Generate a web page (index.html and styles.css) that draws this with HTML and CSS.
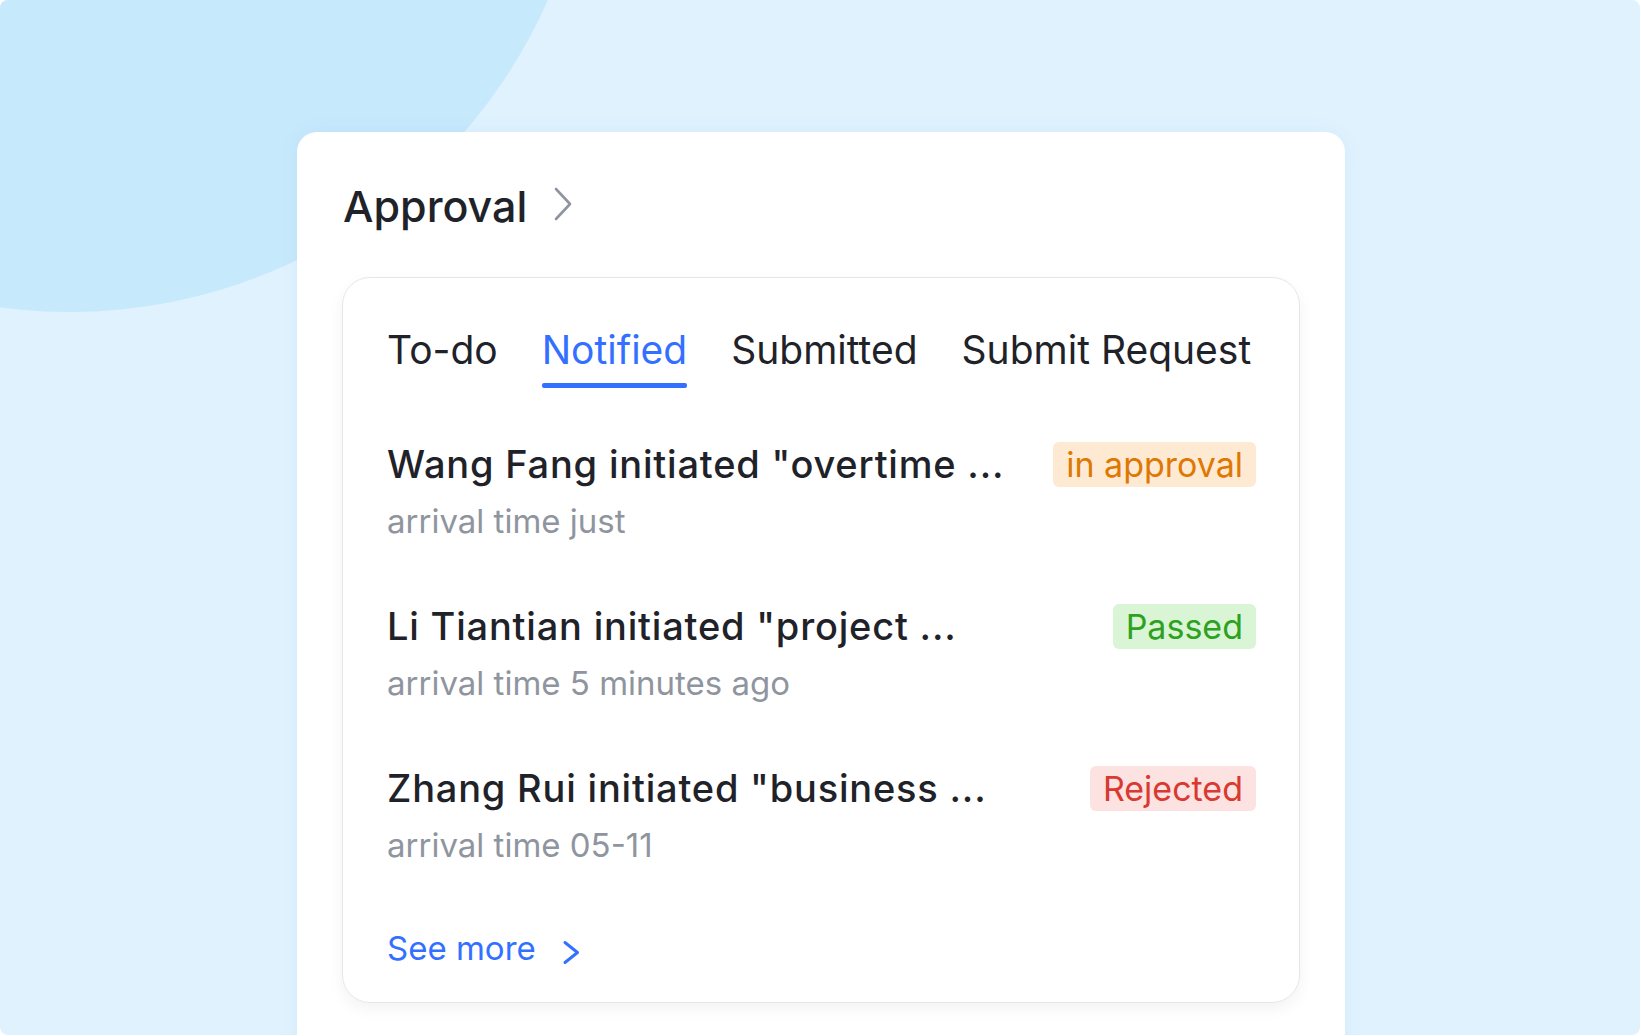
FILE: index.html
```html
<!DOCTYPE html>
<html lang="en">
<head>
    <meta charset="UTF-8">
    <meta name="viewport" content="width=device-width, initial-scale=1.0">
    <title>Approval</title>
    <link rel="stylesheet" href="styles.css">
</head>
<body>
    <div class="panel">
        <div class="card">
            <div class="card-head">
                <span>Approval</span>
                <svg class="head-arrow" width="20" height="34" viewBox="0 0 20 34"><path d="M3 2l14 15L3 32" fill="none" stroke="#8f959e" stroke-width="2.6" stroke-linecap="round" stroke-linejoin="round"/></svg>
            </div>

            <div class="box">
                <div class="tabs">
                    <div class="tab">To-do</div>
                    <div class="tab active">Notified</div>
                    <div class="tab">Submitted</div>
                    <div class="tab">Submit Request</div>
                </div>

                <div class="list">
                    <div class="item">
                        <div class="item-top">
                            <span class="item-title">Wang Fang initiated &quot;overtime ...</span>
                            <span class="badge pending">in approval</span>
                        </div>
                        <div class="item-time">arrival time just</div>
                    </div>
                    <div class="item">
                        <div class="item-top">
                            <span class="item-title">Li Tiantian initiated &quot;project ...</span>
                            <span class="badge passed">Passed</span>
                        </div>
                        <div class="item-time">arrival time 5 minutes ago</div>
                    </div>
                    <div class="item">
                        <div class="item-top">
                            <span class="item-title">Zhang Rui initiated &quot;business ...</span>
                            <span class="badge rejected">Rejected</span>
                        </div>
                        <div class="item-time">arrival time 05-11</div>
                    </div>
                </div>

                <div class="more">
                    <span>See more</span>
                    <svg class="more-arrow" width="19" height="25" viewBox="0 0 19 25"><path d="M3 2.5l12.5 10L3 22.5" fill="none" stroke="#3370ff" stroke-width="3" stroke-linecap="round" stroke-linejoin="round"/></svg>
                </div>
            </div>
        </div>
    </div>
</body>
</html>
```

FILE: styles.css
```css
body {
    margin: 0;
    background-color: #fff;
    font-family: 'Inter', 'Liberation Sans', sans-serif;
    color: #1f2329;
}

.panel {
    position: relative;
    width: 1640px;
    height: 1035px;
    box-sizing: border-box;
    padding: 132px 0 0 297px;
    background-color: #e0f2fe;
    border-radius: 8px;
    overflow: hidden;
}

/* big soft circle in the corner */
.panel::before {
    content: "";
    position: absolute;
    left: -452px;
    top: -732px;
    width: 1044px;
    height: 1044px;
    border-radius: 50%;
    background-color: #c7e9fc;
}

.card {
    position: relative;
    width: 1048px;
    height: 960px;
    box-sizing: border-box;
    padding: 48px 45px 0;
    background-color: #fff;
    border-radius: 20px;
    box-shadow: 0 0 20px rgba(30, 100, 180, 0.06);
}

.card-head {
    display: flex;
    align-items: center;
    padding-left: 1px;
    font-size: 43px;
    font-weight: 500;
    line-height: 52px;
}

.head-arrow {
    margin-left: 26px;
    margin-bottom: 5px;
}

.box {
    margin-top: 45px;
    padding: 49px 43px 34px 44px;
    border: 1px solid #e4e6ea;
    border-radius: 28px;
    box-shadow: 0 6px 16px rgba(0, 0, 0, 0.05);
}

.tabs {
    display: flex;
    gap: 44px;
    font-size: 39px;
    line-height: 46px;
}

.tab {
    position: relative;
    padding-bottom: 15px;
}

.tab.active {
    color: #3370ff;
}

.tab.active::after {
    content: "";
    position: absolute;
    left: 0;
    right: 0;
    bottom: 0;
    height: 5px;
    border-radius: 2px;
    background-color: #3370ff;
}

.list {
    display: flex;
    flex-direction: column;
    gap: 63px;
    margin-top: 54px;
}

.item-top {
    display: flex;
    align-items: center;
    justify-content: space-between;
    height: 45px;
}

.item-title {
    font-size: 38px;
    font-weight: 500;
    line-height: 45px;
    letter-spacing: 0.8px;
}

.item-time {
    margin-top: 14px;
    font-size: 33px;
    line-height: 40px;
    color: #8f959e;
}

.badge {
    padding: 0 13px;
    font-size: 34px;
    line-height: 45px;
    border-radius: 6px;
}

.badge.pending {
    background-color: #feead2;
    color: #de7802;
}

.badge.passed {
    background-color: #d9f5d6;
    color: #2ea121;
}

.badge.rejected {
    background-color: #fde2e2;
    color: #d83931;
}

.more {
    display: flex;
    align-items: center;
    margin-top: 63px;
    font-size: 33px;
    line-height: 40px;
    color: #3370ff;
}

.more-arrow {
    margin-left: 26px;
    margin-top: 9px;
}
```
